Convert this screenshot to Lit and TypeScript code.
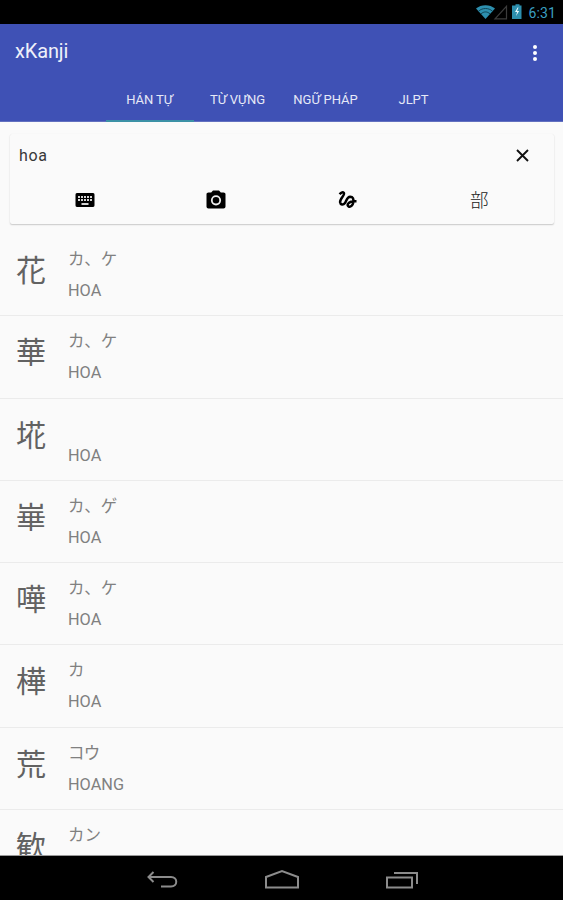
import { LitElement, html, css, svg } from "lit";
import { customElement } from "lit/decorators.js";
import { classMap } from "lit/directives/class-map.js";

interface Entry {
  kanji: string;
  kana: string;
  reading: string;
}

const entries: Entry[] = [
  { kanji: "花", kana: "カ、ケ", reading: "HOA" },
  { kanji: "華", kana: "カ、ケ", reading: "HOA" },
  { kanji: "埖", kana: "", reading: "HOA" },
  { kanji: "崋", kana: "カ、ゲ", reading: "HOA" },
  { kanji: "嘩", kana: "カ、ケ", reading: "HOA" },
  { kanji: "樺", kana: "カ", reading: "HOA" },
  { kanji: "荒", kana: "コウ", reading: "HOANG" },
  { kanji: "歓", kana: "カン", reading: "" },
];

const tabs = ["HÁN TỰ", "TỪ VỰNG", "NGỮ PHÁP", "JLPT"];

const icon = (w: number, h: number, body: unknown) =>
  html`<svg width=${w} height=${h} viewBox="0 0 ${w} ${h}" fill="none">${body}</svg>`;

@customElement("status-bar")
class StatusBar extends LitElement {
  static styles = css`
    :host {
      display: flex;
      flex: none;
      height: 24px;
      box-sizing: border-box;
      padding-right: 7px;
      align-items: center;
      justify-content: flex-end;
      background: #000;
    }
    svg { display: block; }
    .time {
      margin-left: 5px;
      font: 14px/24px Roboto, sans-serif;
      color: #3a9fc2;
      padding-top: 1px;
      height: 24px;
      letter-spacing: 0.1px;
    }
  `;
  render() {
    return html`
      ${icon(49, 24, svg`
        <path d="M1 8.500C6 4 15 4 20 8.500L10.500 19Z" fill="#2d8fae"/>
        <path d="M3.500 11.200C7.500 7.600 13.500 7.600 17.500 11.200M6 13.800C9 11.300 12 11.300 15 13.800" stroke="#0d3b4a" stroke-width=".9"/>
        <path d="M31.500 6.300V18.800H20Z" stroke="#3c3c3c" stroke-width="1.200"/>
        <path d="M38.700 5.500H40.500V4.200H44.500V5.500H46.500V19H37V5.500Z" fill="#2d8fae"/>
        <path d="M42.600 7.500L40 12H42.100L41 16L44.200 11H42.100L43.500 7.500Z" fill="#e4f6fb"/>
      `)}
      <span class="time">6:31</span>
    `;
  }
}

@customElement("app-header")
class AppHeader extends LitElement {
  static styles = css`
    :host {
      display: flex;
      flex: none;
      flex-direction: column;
      height: 98px;
      background: #3f51b5;
      color: #fff;
      font-family: Roboto, sans-serif;
      box-shadow: inset 0 -1px 0 #6270bf;
    }
    .bar {
      display: flex;
      height: 54px;
      flex: none;
      align-items: center;
      justify-content: space-between;
      padding: 0 25px 0 15px;
    }
    .title { font-size: 20px; letter-spacing: -0.15px; color: #eef0fa; }
    .more { display: block; margin-top: 4px; }
    .tabs {
      display: grid;
      grid-template-columns: repeat(4, 88px);
      justify-content: center;
      height: 44px;
    }
    .tab {
      display: flex;
      box-sizing: border-box;
      align-items: center;
      justify-content: center;
      padding-top: 1px;
      border-bottom: 2px solid transparent;
      font-size: 13px;
      letter-spacing: -0.05px;
      color: #e6e9f7;
      white-space: nowrap;
    }
    .active { border-color: #3c91a6; }
  `;
  render() {
    return html`
      <div class="bar">
        <span class="title">xKanji</span>
        <svg class="more" width="6" height="18" fill="#fff">
          <circle cx="3" cy="3" r="2"/><circle cx="3" cy="9" r="2"/><circle cx="3" cy="15" r="2"/>
        </svg>
      </div>
      <div class="tabs">
        ${tabs.map((t, i) => html`<div class=${classMap({ tab: true, active: i === 0 })}>${t}</div>`)}
      </div>
    `;
  }
}

@customElement("search-card")
class SearchCard extends LitElement {
  static styles = css`
    :host {
      display: block;
      flex: none;
      box-sizing: border-box;
      height: 90px;
      margin: 12px 9px 10px 10px;
      background: #fafafa;
      border-radius: 2px;
      box-shadow: 0 1px 1.500px rgba(0, 0, 0, 0.2), 0 0 1px rgba(0, 0, 0, 0.06);
    }
    svg { display: block; }
    .query {
      display: flex;
      height: 43px;
      align-items: center;
      justify-content: space-between;
      padding: 0 25px 0 9px;
      font: 16px Roboto, sans-serif;
      letter-spacing: 0.65px;
      color: #383838;
    }
    .tools {
      display: grid;
      grid-template-columns: repeat(4, 131.500px);
      margin-left: 9px;
      height: 46px;
      align-items: center;
      justify-items: center;
    }
    .radical { font: 300 18.500px/28px "Noto Sans CJK JP", sans-serif; color: #222; padding-bottom: 2px; }
  `;
  render() {
    return html`
      <div class="query">
        <span>hoa</span>
        ${icon(13, 13, svg`<path d="M1 1L12 12M12 1L1 12" stroke="#111" stroke-width="1.900"/>`)}
      </div>
      <div class="tools">
        ${icon(24, 24, svg`<path fill="#000" d="M20 5H4C2.900 5 2.500 5.900 2.500 7V17C2.500 18.100 2.900 19 4 19H20C21.100 19 21.500 18.100 21.500 17V7C21.500 5.900 21.100 5 20 5Z"/>
          <path fill="#d5d5d5" d="M5 8h2v2H5zM8 8h2v2H8zM11 8h2v2h-2zM14 8h2v2h-2zM17 8h2v2h-2zM5 11h2v2H5zM8 11h2v2H8zM11 11h2v2h-2zM14 11h2v2h-2zM17 11h2v2h-2zM8.500 15h7v2h-7z"/>`)}
        ${icon(24, 24, svg`<path fill="#000" d="M9 2.500L7.200 4.500H4.500C3.300 4.500 2.500 5.200 2.500 6.300V18.500C2.500 19.600 3.300 20.500 4.500 20.500H19.500C20.700 20.500 21.500 19.600 21.500 18.500V6.300C21.500 5.200 20.700 4.500 19.500 4.500H16.800L15 2.500Z"/>
          <circle cx="12" cy="12.300" r="4.200" stroke="#eee" stroke-width="1.800"/>`)}
        ${icon(24, 24, svg`<path stroke="#000" stroke-width="2.500" stroke-linejoin="round" d="M3.600 6.200C4.800 4.800 6.600 3.600 7.800 4.900C9.500 7 3.700 10.500 4.100 14.200C4.500 16.900 7.200 17.200 8.800 15.200C10.500 13 10.800 8.900 14.200 8.700C17 8.700 17.800 11 17.300 14.500C16.700 17.500 14.700 19.300 12.700 18.500C10.500 17.500 12 14.600 15 13.700C16.600 13.200 18 13.300 20.500 13.300"/>`)}
        <span class="radical">部</span>
      </div>
    `;
  }
}

@customElement("kanji-row")
class KanjiRow extends LitElement {
  static properties = { entry: { attribute: false } };
  declare entry: Entry;
  static styles = css`
    :host {
      display: flex;
      flex: none;
      box-sizing: border-box;
      height: 82.250px;
      padding: 8px 16px;
      border-bottom: 1px solid #ebebeb;
      font-family: Roboto, "Noto Sans CJK JP", sans-serif;
      color: #808080;
    }
    .kanji {
      width: 52px;
      font: 400 30px/52px "Noto Sans CJK JP", sans-serif;
      color: #626262;
    }
    .kana { height: 32px; font-size: 16.500px; line-height: 36px; }
    .reading { height: 32px; font-size: 16.300px; line-height: 34px; }
  `;
  render() {
    return html`
      <div class="kanji">${this.entry.kanji}</div>
      <div class="lines">
        <div class="kana">${this.entry.kana}</div>
        <div class="reading">${this.entry.reading}</div>
      </div>
    `;
  }
}

@customElement("nav-bar")
class NavBar extends LitElement {
  static styles = css`
    :host {
      display: grid;
      flex: none;
      box-sizing: border-box;
      height: 45px;
      grid-template-columns: repeat(3, 120px);
      justify-content: center;
      justify-items: center;
      align-items: center;
      background: #000;
      border-top: 1px solid #999;
      padding-top: 3px;
    }
    svg { display: block; }
  `;
  render() {
    return html`
      ${icon(36, 22, svg`<path d="M9.500 3L4.500 8L9.500 13M4.500 8H27C34 8 34 17.500 27 17.500H17" stroke="#8c8c8c" stroke-width="2"/>`)}
      ${icon(36, 22, svg`<path d="M2 18.500V8L18 2L34 8V18.500Z" stroke="#8c8c8c" stroke-width="2"/>`)}
      ${icon(36, 22, svg`<path d="M3 8.500H28V18.500H3ZM10 4H33V15" stroke="#8c8c8c" stroke-width="2"/>`)}
    `;
  }
}

@customElement("app-root")
class AppRoot extends LitElement {
  static styles = css`
    :host {
      display: flex;
      flex-direction: column;
      height: 900px;
      overflow: hidden;
      background: #fafafa;
    }
    .list {
      display: flex;
      flex: 1;
      min-height: 0;
      flex-direction: column;
      overflow: hidden;
    }
  `;
  render() {
    return html`
      <status-bar></status-bar>
      <app-header></app-header>
      <search-card></search-card>
      <div class="list">
        ${entries.map((e) => html`<kanji-row .entry=${e}></kanji-row>`)}
      </div>
      <nav-bar></nav-bar>
    `;
  }
}
